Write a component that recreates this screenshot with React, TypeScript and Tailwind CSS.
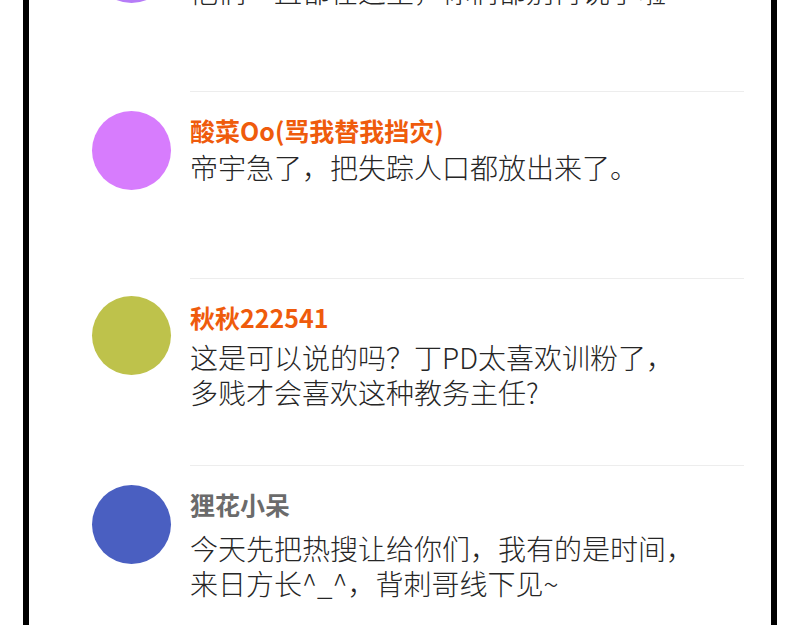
type Comment = {
  name: string;
  nameColor: string;
  avatar: string;
  lines: string[];
  bodyGap: string;
  avatarGap: string;
};

const COMMENTS: Comment[] = [
  {
    name: '小鱼干',
    nameColor: 'text-[#ef5b0c]',
    avatar: 'bg-[#b67cf7]',
    lines: ['他们一直都在这里，你们都别再说了啦'],
    bodyGap: 'mt-[16px]',
    avatarGap: 'mt-[20px]',
  },
  {
    name: '酸菜Oo(骂我替我挡灾)',
    nameColor: 'text-[#ef5b0c]',
    avatar: 'bg-[#d77cfd]',
    lines: ['帝宇急了，把失踪人口都放出来了。'],
    bodyGap: 'mt-[5px]',
    avatarGap: 'mt-[20px]',
  },
  {
    name: '秋秋222541',
    nameColor: 'text-[#ef5b0c]',
    avatar: 'bg-[#bec24b]',
    lines: ['这是可以说的吗？丁PD太喜欢训粉了，', '多贱才会喜欢这种教务主任?'],
    bodyGap: 'mt-2',
    avatarGap: 'mt-[18px]',
  },
  {
    name: '狸花小呆',
    nameColor: 'text-[#6b6b6b]',
    avatar: 'bg-[#4a5fc1]',
    lines: ['今天先把热搜让给你们，我有的是时间，', '来日方长^_^，背刺哥线下见~'],
    bodyGap: 'mt-3',
    avatarGap: 'mt-[20px]',
  },
];

function CommentRow({ c }: { c: Comment }) {
  return (
    <div className="flex h-[187px] items-start gap-[19px]">
      {/* avatar */}
      <div className={`${c.avatarGap} w-[79px] h-[79px] rounded-full flex-shrink-0 ${c.avatar}`} />

      {/* text */}
      <div className="flex-1 h-full border-t border-[#ededed] pt-[23px]">
        <p className={`text-[25px] leading-[30px] font-bold whitespace-nowrap ${c.nameColor}`}>{c.name}</p>
        <div className={`${c.bodyGap} text-[28px] leading-[35px] font-light text-[#262626] whitespace-nowrap`}>
          {c.lines.map(line => (
            <p key={line}>{line}</p>
          ))}
        </div>
      </div>
    </div>
  );
}

export default function App() {
  return (
    <div
      className="w-[800px] h-[625px] bg-white overflow-hidden"
      style={{ fontFamily: '"Noto Sans CJK SC", "Noto Sans", sans-serif' }}
    >
      <div className="ml-[23px] w-[754px] h-full border-x-[6px] border-black bg-white overflow-hidden">
        <div className="-mt-[96px] pl-[63px] pr-[27px]">
          {COMMENTS.map(c => (
            <CommentRow key={c.name} c={c} />
          ))}
        </div>
      </div>
    </div>
  );
}
